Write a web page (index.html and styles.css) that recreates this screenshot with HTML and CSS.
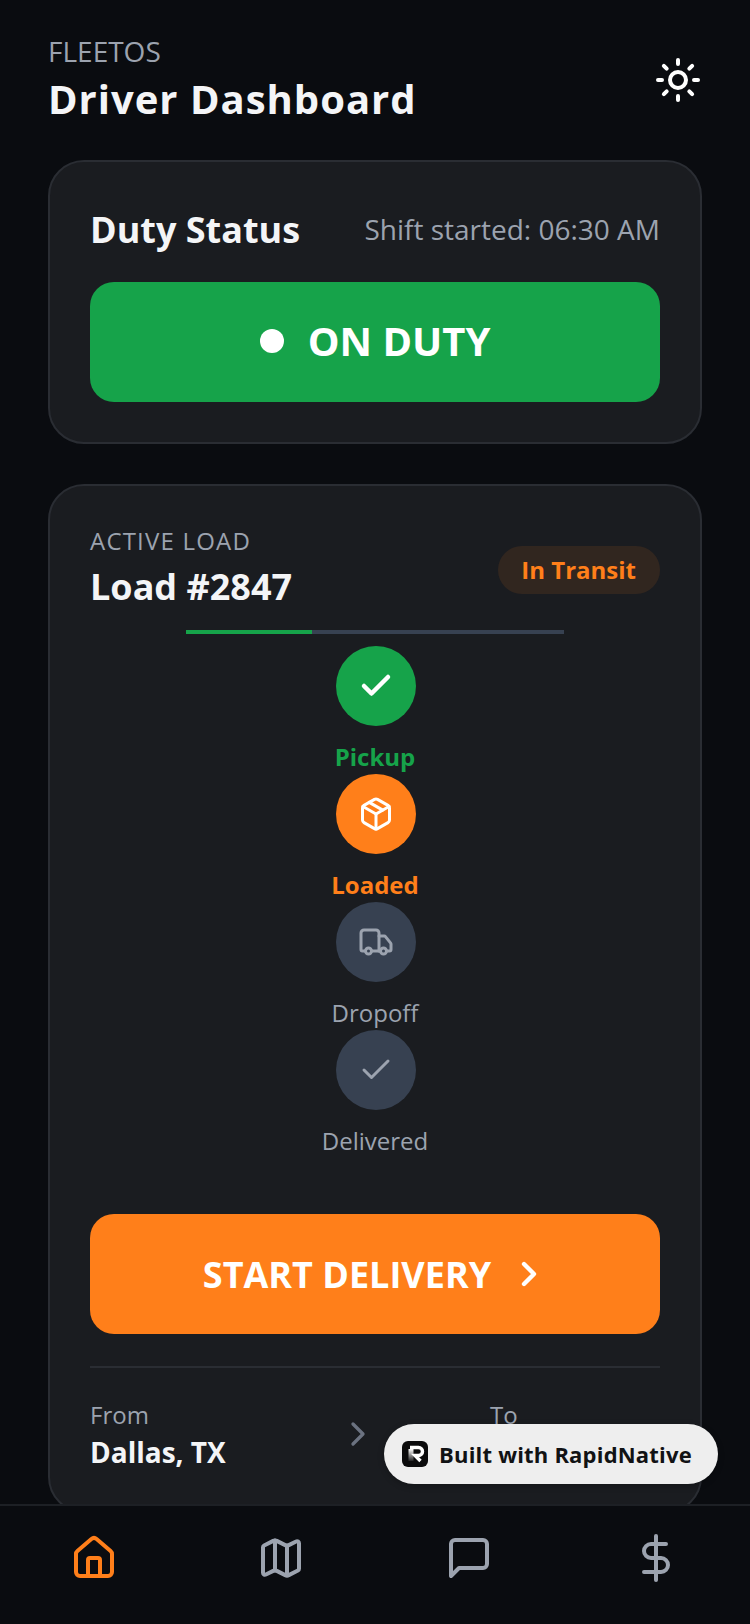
FILE: index.html
```html
<!DOCTYPE html>
<html lang="en">
<head>
  <meta charset="UTF-8">
  <title>FleetOS Driver Dashboard</title>
  <link rel="stylesheet" href="styles.css">
</head>
<body>
  <main class="screen">
    <header class="top-bar">
      <div>
        <div class="brand">FLEETOS</div>
        <h1>Driver Dashboard</h1>
      </div>
      <svg class="icon sun" viewBox="0 0 24 24">
        <circle cx="12" cy="12" r="4"/>
        <path d="M12 2v2M12 20v2M4.93 4.93l1.41 1.41M17.66 17.66l1.41 1.41M2 12h2M20 12h2M6.34 17.66l-1.41 1.41M19.07 4.93l-1.41 1.41"/>
      </svg>
    </header>

    <section class="card">
      <div class="duty-head">
        <h2>Duty Status</h2>
        <span class="shift">Shift started: 06:30 AM</span>
      </div>
      <div class="big-button duty-button">
        <span class="duty-dot"></span>
        ON DUTY
      </div>
    </section>

    <section class="card load-card">
      <div class="load-head">
        <div class="load-title">
          <div class="eyebrow">ACTIVE LOAD</div>
          <h2>Load #2847</h2>
        </div>
        <span class="pill">In Transit</span>
      </div>

      <div class="progress"><div class="progress-fill"></div></div>

      <div class="steps">
        <div class="step done">
          <div class="step-circle">
            <svg class="icon step-icon" viewBox="0 0 24 24"><path d="M20 6 9 17l-5-5"/></svg>
          </div>
          <div class="step-label">Pickup</div>
        </div>
        <div class="step current">
          <div class="step-circle">
            <svg class="icon step-icon" viewBox="0 0 24 24">
              <path d="M11 21.73a2 2 0 0 0 2 0l7-4A2 2 0 0 0 21 16V8a2 2 0 0 0-1-1.73l-7-4a2 2 0 0 0-2 0l-7 4A2 2 0 0 0 3 8v8a2 2 0 0 0 1 1.73z"/>
              <path d="M12 22V12"/>
              <path d="M3.29 7 12 12l8.71-5"/>
              <path d="m7.5 4.27 9 5.15"/>
            </svg>
          </div>
          <div class="step-label">Loaded</div>
        </div>
        <div class="step">
          <div class="step-circle">
            <svg class="icon step-icon" viewBox="0 0 24 24">
              <path d="M14 18V6a2 2 0 0 0-2-2H4a2 2 0 0 0-2 2v11a1 1 0 0 0 1 1h2"/>
              <path d="M15 18H9"/>
              <path d="M19 18h2a1 1 0 0 0 1-1v-3.65a1 1 0 0 0-.22-.624l-3.48-4.35A1 1 0 0 0 17.52 8H14"/>
              <circle cx="17" cy="18" r="2"/>
              <circle cx="7" cy="18" r="2"/>
            </svg>
          </div>
          <div class="step-label">Dropoff</div>
        </div>
        <div class="step">
          <div class="step-circle">
            <svg class="icon step-icon" viewBox="0 0 24 24"><path d="M20 6 9 17l-5-5"/></svg>
          </div>
          <div class="step-label">Delivered</div>
        </div>
      </div>

      <div class="big-button start-button">
        START DELIVERY
        <svg class="icon start-chevron" viewBox="0 0 24 24"><path d="m9 18 6-6-6-6"/></svg>
      </div>

      <div class="route">
        <div>
          <div class="route-label">From</div>
          <div class="route-value">Dallas, TX</div>
        </div>
        <svg class="icon route-chevron" viewBox="0 0 24 24"><path d="m9 18 6-6-6-6"/></svg>
        <div class="route-to">
          <div class="route-label">To</div>
        </div>
      </div>
    </section>
  </main>

  <nav class="tab-bar">
    <svg class="icon tab active" viewBox="0 0 24 24">
      <path d="M15 21v-8a1 1 0 0 0-1-1h-4a1 1 0 0 0-1 1v8"/>
      <path d="M3 10a2 2 0 0 1 .709-1.528l7-5.999a2 2 0 0 1 2.582 0l7 5.999A2 2 0 0 1 21 10v9a2 2 0 0 1-2 2H5a2 2 0 0 1-2-2z"/>
    </svg>
    <svg class="icon tab" viewBox="0 0 24 24">
      <path d="M14.106 5.553a2 2 0 0 0 1.788 0l3.659-1.83A1 1 0 0 1 21 4.619v12.764a1 1 0 0 1-.553.894l-4.553 2.277a2 2 0 0 1-1.788 0l-4.212-2.106a2 2 0 0 0-1.788 0l-3.659 1.83A1 1 0 0 1 3 19.381V6.618a1 1 0 0 1 .553-.894l4.553-2.277a2 2 0 0 1 1.788 0z"/>
      <path d="M15 5.764v15"/>
      <path d="M9 3.236v15"/>
    </svg>
    <svg class="icon tab" viewBox="0 0 24 24">
      <path d="M21 15a2 2 0 0 1-2 2H7l-4 4V5a2 2 0 0 1 2-2h14a2 2 0 0 1 2 2z"/>
    </svg>
    <svg class="icon tab" viewBox="0 0 24 24">
      <path d="M12 1v22"/>
      <path d="M17 5H9.5a3.5 3.5 0 0 0 0 7h5a3.5 3.5 0 0 1 0 7H6"/>
    </svg>
  </nav>

  <div class="built-badge">
    <svg class="built-logo" viewBox="0 0 26 26">
      <defs>
        <linearGradient id="stemFade" x1="0" y1="0" x2="0" y2="1">
          <stop offset="0" stop-color="#fff"/>
          <stop offset="1" stop-color="#fff" stop-opacity="0.1"/>
        </linearGradient>
      </defs>
      <rect width="26" height="26" rx="6" fill="#0b0b0c"/>
      <path class="built-stem" d="M6.5 8h5v12h-5z"/>
      <path class="built-mark" d="M8 6.5h8.5a4 4 0 0 1 0 8H13l5.5 5.5"/>
    </svg>
    <span>Built with RapidNative</span>
  </div>
</body>
</html>
```

FILE: styles.css
```css
* {
  box-sizing: border-box;
}

body {
  position: relative;
  display: flex;
  flex-direction: column;
  width: 750px;
  height: 1624px;
  margin: 0;
  overflow: hidden;
  background: #0a0c10;
  color: #f4f5f7;
  font-family: "Open Sans", "Noto Sans", sans-serif;
}

h1, h2 {
  margin: 0;
}

.icon {
  display: block;
  fill: none;
  stroke: currentColor;
  stroke-width: 2;
  stroke-linecap: round;
  stroke-linejoin: round;
  flex-shrink: 0;
}

.screen {
  flex: 1;
  min-height: 0;
  overflow: hidden;
  padding: 34px 48px 0;
}

.top-bar {
  display: flex;
  justify-content: space-between;
  align-items: center;
  margin-bottom: 35px;
}

.brand {
  margin-bottom: 5px;
  font-size: 28px;
  line-height: 34px;
  color: #9ca3af;
}

h1 {
  font-size: 40px;
  line-height: 52px;
  font-weight: 700;
  letter-spacing: 1px;
}

.sun {
  width: 48px;
  height: 48px;
  color: #fff;
}

.card {
  margin-bottom: 40px;
  padding: 38px 40px 40px;
  background: #1a1c20;
  border: 2px solid #2a2d33;
  border-radius: 36px;
}

.duty-head {
  display: flex;
  justify-content: space-between;
  align-items: center;
  height: 58px;
  margin-bottom: 24px;
}

.duty-head h2 {
  font-size: 36px;
  font-weight: 700;
}

.shift {
  font-size: 28px;
  color: #9ca3af;
}

.big-button {
  display: flex;
  justify-content: center;
  align-items: center;
  height: 120px;
  border-radius: 24px;
  color: #fff;
  font-size: 40px;
  font-weight: 700;
}

.duty-button {
  gap: 24px;
  padding-bottom: 3px;
  background: #16a34a;
}

.duty-dot {
  width: 24px;
  height: 24px;
  border-radius: 50%;
  background: #fff;
}

.load-head {
  display: flex;
  justify-content: space-between;
  align-items: center;
  height: 92px;
}

.load-title {
  align-self: flex-start;
}

.eyebrow {
  font-size: 24px;
  line-height: 34px;
  letter-spacing: 1.2px;
  color: #9ca3af;
}

.load-head h2 {
  font-size: 36px;
  line-height: 58px;
  font-weight: 700;
}

.pill {
  padding: 0 24px 0 23px;
  font-size: 24px;
  line-height: 48px;
  font-weight: 700;
  color: #ff7f1a;
  background: rgba(255, 127, 26, 0.1);
  border-radius: 24px;
}

.progress {
  width: 378px;
  height: 4px;
  margin: 14px auto 12px;
  background: #374151;
}

.progress-fill {
  width: 33.33%;
  height: 100%;
  background: #16a34a;
}

.steps {
  display: flex;
  flex-direction: column;
  align-items: center;
}

.step {
  display: flex;
  flex-direction: column;
  align-items: center;
}

.step-circle {
  display: flex;
  justify-content: center;
  align-items: center;
  width: 80px;
  height: 80px;
  margin-left: 2px;
  border-radius: 50%;
  background: #374151;
  color: #9ca3af;
}

.step-icon {
  width: 36px;
  height: 36px;
}

.step-label {
  margin-top: 14px;
  font-size: 24px;
  line-height: 34px;
  color: #9ca3af;
}

.done .step-circle {
  background: #16a34a;
  color: #fff;
}

.done .step-icon {
  stroke-width: 3;
}

.done .step-label {
  color: #16a34a;
  font-weight: 700;
}

.current .step-circle {
  background: #ff7f1a;
  color: #fff;
}

.current .step-label {
  color: #ff7f1a;
  font-weight: 700;
}

.start-button {
  gap: 18px;
  margin-top: 56px;
  padding-left: 2px;
  background: #ff7f1a;
  font-size: 36px;
}

.start-chevron {
  width: 40px;
  height: 40px;
  stroke-width: 2.6;
}

.route {
  display: flex;
  justify-content: space-between;
  align-items: center;
  margin-top: 32px;
  padding-top: 29px;
  border-top: 2px solid #2a2d33;
}

.route-label {
  font-size: 24px;
  line-height: 36px;
  color: #9ca3af;
}

.route-value {
  font-size: 28px;
  line-height: 38px;
  font-weight: 700;
}

.route-chevron {
  width: 40px;
  height: 40px;
  color: #6b7280;
}

.route-to {
  align-self: flex-start;
  width: 170px;
}

.tab-bar {
  display: grid;
  grid-template-columns: repeat(4, 1fr);
  justify-items: center;
  align-items: center;
  flex-shrink: 0;
  height: 120px;
  padding-bottom: 14px;
  background: #0a0c10;
  border-top: 2px solid #1d2025;
}

.tab {
  width: 48px;
  height: 48px;
  color: #9ca3af;
}

.tab.active {
  color: #ff7f1a;
}

.built-badge {
  position: absolute;
  top: 1424px;
  left: 384px;
  display: flex;
  align-items: center;
  gap: 11px;
  width: 334px;
  height: 60px;
  padding-left: 18px;
  background: #eeeeee;
  border-radius: 30px;
  box-shadow: 0 2px 6px rgba(0, 0, 0, 0.25);
  color: #111214;
  font-size: 22px;
  font-weight: 700;
  letter-spacing: 0.2px;
}

.built-logo {
  width: 26px;
  height: 26px;
}

.built-stem {
  fill: url(#stemFade);
}

.built-mark {
  fill: none;
  stroke: #fff;
  stroke-width: 3.4;
}
```
